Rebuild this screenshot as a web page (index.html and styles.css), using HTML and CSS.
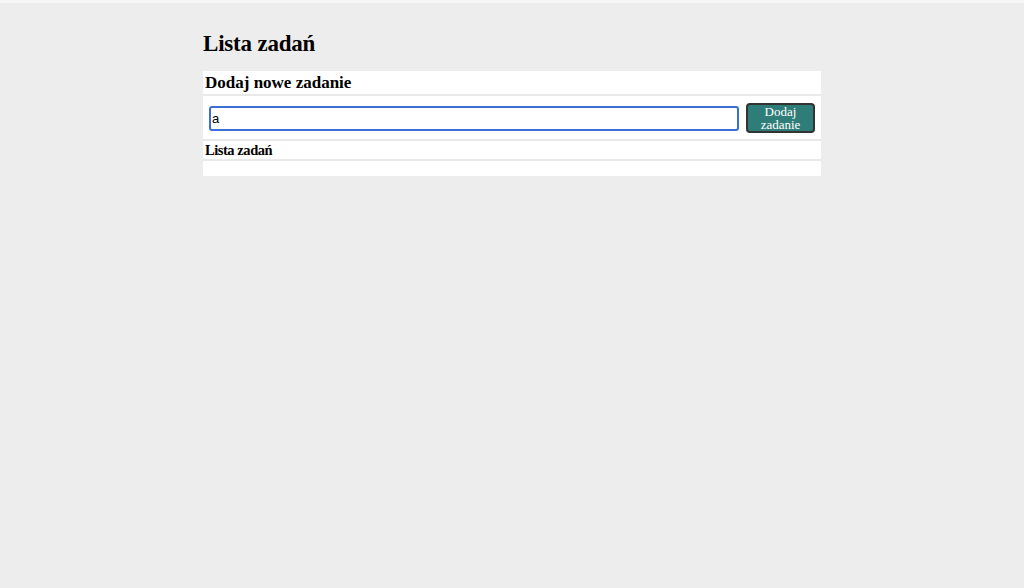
FILE: index.html
```html
<!DOCTYPE html>
<html lang="pl">
<head>
<meta charset="utf-8">
<title>Lista zadań</title>
<link rel="stylesheet" href="styles.css">
</head>
<body>
<div class="topline"></div>
<main class="app">
  <h1 class="title">Lista zadań</h1>
  <section class="card">
    <div class="row head-row"><h2 class="sub">Dodaj nowe zadanie</h2></div>
    <form class="row form-row">
      <input class="task-input" type="text" value="a">
      <button class="add-btn" type="button">Dodaj<br>zadanie</button>
    </form>
    <div class="row list-head"><h3 class="list-title">Lista zadań</h3></div>
    <div class="row list-body"></div>
  </section>
</main>
</body>
</html>
```
FILE: styles.css
```css
html, body {
  margin: 0;
  padding: 0;
  background: #ededed;
  font-family: "Liberation Serif", "Times New Roman", serif;
  color: #000;
}
.topline {
  height: 3px;
  background: #f6f6f6;
}
.app {
  width: 618px;
  margin: 0 auto;
  padding-top: 27px;
}
.title {
  font-size: 23px;
  letter-spacing: -0.2px;
  line-height: 27px;
  margin: 0 0 14px 0;
  font-weight: bold;
}
.card {
  display: flex;
  flex-direction: column;
  gap: 2px;
  background: #e9e9e9;
}
.row {
  background: #fff;
}
.head-row {
  padding: 2px 2px 2px;
  height: 19px;
}
.sub {
  margin: 0;
  font-size: 17px;
  line-height: 20px;
}
.form-row {
  margin: 0;
  display: flex;
  align-items: center;
  gap: 7px;
  padding: 7px 6px 6px 6px;
}
.task-input {
  flex: 1;
  height: 25px;
  box-sizing: border-box;
  border: 2px solid #3a6fd8;
  border-radius: 3px;
  padding: 0 1px;
  font-family: "Liberation Sans", Arial, sans-serif;
  font-size: 13px;
  outline: none;
}
.add-btn {
  width: 69px;
  height: 30px;
  box-sizing: border-box;
  background: #2f7d78;
  color: #fff;
  border: 2px solid #333;
  border-radius: 4px;
  font-family: "Liberation Serif", "Times New Roman", serif;
  font-size: 13px;
  line-height: 13px;
  padding: 0;
}
.list-head {
  padding: 1px 2px 1px;
  height: 16px;
}
.list-title {
  margin: 0;
  font-size: 14.5px;
  letter-spacing: -0.45px;
  line-height: 17px;
}
.list-body {
  height: 15px;
}
```
